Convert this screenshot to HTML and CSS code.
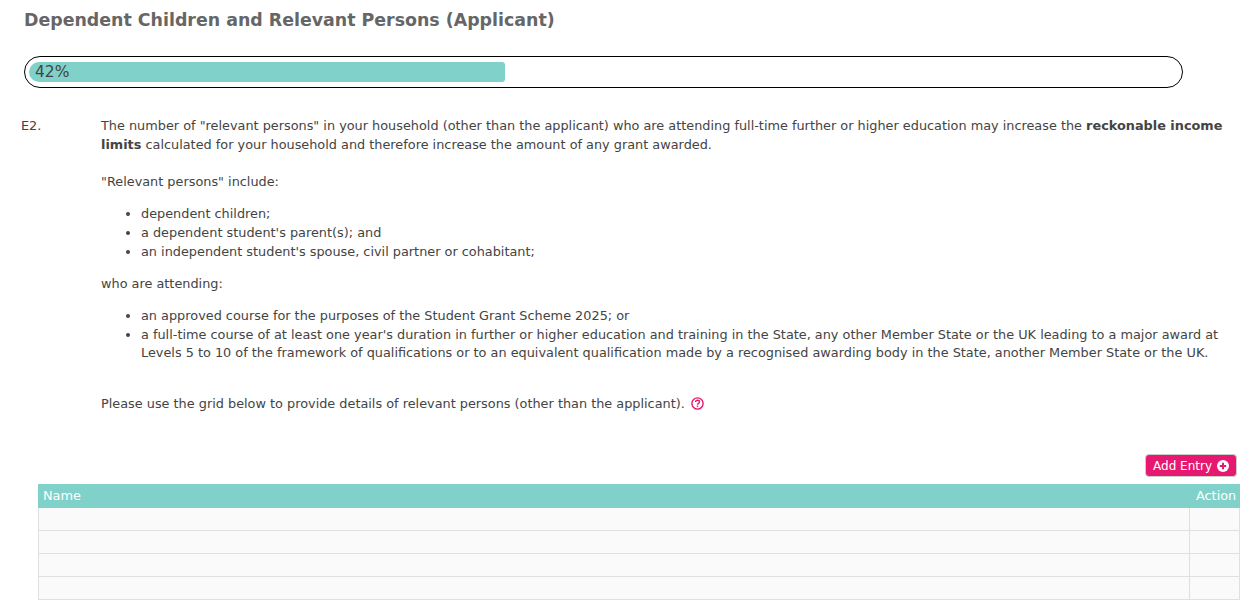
FILE: index.html
```html
<!DOCTYPE html>
<html lang="en">
<head>
    <meta charset="UTF-8">
    <title>Dependent Children and Relevant Persons</title>
    <link rel="stylesheet" href="styles.css">
</head>
<body>
    <h1 class="page-title">Dependent Children and Relevant Persons (Applicant)</h1>

    <div class="progress">
        <div class="progress-bar">42%</div>
    </div>

    <div class="question">
        <div class="question-no">E2.</div>
        <div class="question-text">
            <p class="intro">The number of "relevant persons" in your household (other than the applicant) who are attending full-time further or higher education may increase the <strong>reckonable income limits</strong> calculated for your household and therefore increase the amount of any grant awarded.</p>
            <p class="include">"Relevant persons" include:</p>
            <ul class="list-first">
                <li>dependent children;</li>
                <li>a dependent student's parent(s); and</li>
                <li>an independent student's spouse, civil partner or cohabitant;</li>
            </ul>
            <p class="attending">who are attending:</p>
            <ul class="list-second">
                <li>an approved course for the purposes of the Student Grant Scheme 2025; or</li>
                <li>a full-time course of at least one year's duration in further or higher education and training in the State, any other Member State or the UK leading to a major award at Levels 5 to 10 of the framework of qualifications or to an equivalent qualification made by a recognised awarding body in the State, another Member State or the UK.</li>
            </ul>
            <p class="grid-note">Please use the grid below to provide details of relevant persons (other than the applicant).
                <svg class="help-icon" width="13" height="13" viewBox="0 0 13 13" aria-hidden="true">
                    <circle cx="6.5" cy="6.5" r="5.6" fill="none" stroke="#e6186f" stroke-width="1.4"/>
                    <path d="M4.5 5.1c0-1.2.9-1.9 2-1.9s2 .7 2 1.7c0 1.5-2 1.4-2 2.8" fill="none" stroke="#e6186f" stroke-width="1.4"/>
                    <rect x="5.8" y="8.6" width="1.4" height="1.4" fill="#e6186f"/>
                </svg>
            </p>
        </div>
    </div>

    <div class="grid-actions">
        <button class="add-btn" type="button">Add Entry
            <svg width="12" height="12" viewBox="0 0 12 12" aria-hidden="true">
                <circle cx="6" cy="6" r="6" fill="#fff"/>
                <path d="M6 2.8v6.4M2.8 6h6.4" stroke="#e6186f" stroke-width="2"/>
            </svg>
        </button>
    </div>

    <table class="grid">
        <thead>
            <tr><th>Name</th><th class="action-col">Action</th></tr>
        </thead>
        <tbody>
            <tr><td></td><td></td></tr>
            <tr><td></td><td></td></tr>
            <tr><td></td><td></td></tr>
            <tr><td></td><td></td></tr>
        </tbody>
    </table>
</body>
</html>
```

FILE: styles.css
```css
body {
    margin: 0;
    height: 605px;
    overflow: hidden;
    font-family: "DejaVu Sans", Verdana, sans-serif;
    font-size: 12.85px;
    line-height: 19px;
    color: #444;
    background-color: #fff;
}

.page-title {
    margin: 8px 0 0 24px;
    font-size: 17.4px;
    line-height: 24px;
    font-weight: bold;
    color: #666;
}

.progress {
    box-sizing: border-box;
    width: 1159px;
    height: 32px;
    margin: 24px 0 0 24px;
    padding: 5px 4px;
    border: 1px solid #000;
    border-radius: 16px;
}

.progress-bar {
    box-sizing: border-box;
    width: 476px;
    height: 20px;
    padding-left: 6px;
    font-size: 15.5px;
    line-height: 20px;
    color: #444;
    background-color: #7fd1c9;
    border-radius: 10px 3px 3px 10px;
}

.question {
    display: flex;
    margin-top: 28px;
    padding-left: 21px;
}

.question-no {
    width: 80px;
    flex-shrink: 0;
}

.question-text {
    width: 1125px;
}

.question-text p {
    margin: 0;
}

.question-text ul {
    margin: 0;
    padding-left: 40px;
}

.include {
    margin-top: 18px !important;
}

.list-first {
    margin-top: 13px !important;
}

.attending {
    margin-top: 13px !important;
}

.list-second {
    margin-top: 14px !important;
    line-height: 18.5px;
}

.grid-note {
    margin-top: 31.3px !important;
}

.help-icon {
    margin-left: 2px;
    vertical-align: -2px;
}

.grid-actions {
    display: flex;
    justify-content: flex-end;
    margin-top: 41px;
    padding-right: 11px;
}

.add-btn {
    display: flex;
    align-items: center;
    gap: 5px;
    height: 23px;
    padding: 2px 7px 0;
    font-family: inherit;
    font-size: 12px;
    color: #fff;
    background-color: #e6186f;
    border: 1px solid #ccc;
    border-radius: 4px;
}

.grid {
    width: 1202px;
    margin: 7px 0 0 38px;
    border-collapse: collapse;
    table-layout: fixed;
}

.grid th {
    height: 21px;
    padding: 0 4px 1px;
    text-align: left;
    font-weight: normal;
    color: #fff;
    background-color: #7fd1c9;
    border: 1px solid #7fd1c9;
}

.grid .action-col {
    width: 39px;
    padding-left: 6px;
    border-left: 1px solid #a9d9d4;
}

.grid td {
    height: 22px;
    padding: 0;
    background-color: #fafafa;
    border: 1px solid #e0e0e0;
}
```
